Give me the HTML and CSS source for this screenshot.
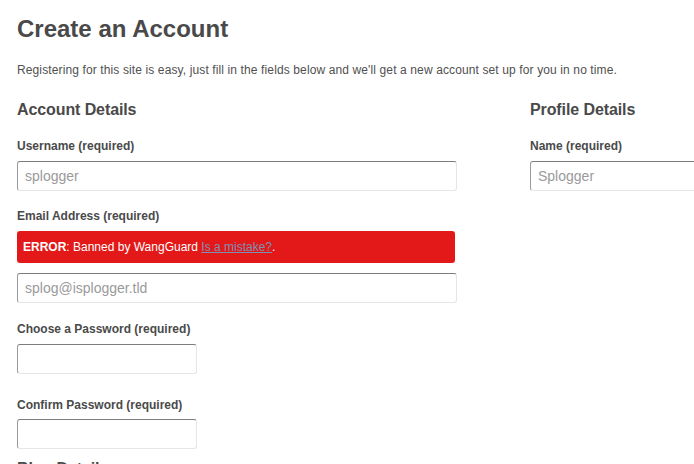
FILE: index.html
```html
<!DOCTYPE html>
<html lang="en">
<head>
<meta charset="utf-8">
<title>Create an Account</title>
<link rel="stylesheet" href="styles.css">
</head>
<body>
<div class="page">
  <h1 class="title">Create an Account</h1>
  <p class="intro">Registering for this site is easy, just fill in the fields below and we'll get a new account set up for you in no time.</p>
  <div class="columns">
    <section class="col">
      <h2 class="section-title">Account Details</h2>
      <div class="field">
        <label class="label">Username (required)</label>
        <input class="input wide" type="text" placeholder="splogger">
      </div>
      <div class="field email">
        <label class="label">Email Address (required)</label>
        <div class="error"><strong>ERROR</strong>: Banned by WangGuard <a href="#" class="error-link">Is a mistake?</a>.</div>
        <input class="input wide" type="text" placeholder="splog@isplogger.tld">
      </div>
      <div class="field pw">
        <label class="label">Choose a Password (required)</label>
        <input class="input short" type="password">
      </div>
      <div class="field last">
        <label class="label">Confirm Password (required)</label>
        <input class="input short" type="password">
      </div>
      <h2 class="section-title">Blog Details</h2>
    </section>
    <section class="col">
      <h2 class="section-title">Profile Details</h2>
      <div class="field">
        <label class="label">Name (required)</label>
        <input class="input wide" type="text" placeholder="Splogger">
      </div>
    </section>
  </div>
</div>
</body>
</html>
```
FILE: styles.css
```css
html, body {
  margin: 0;
  padding: 0;
  background: #ffffff;
  overflow: hidden;
}
body {
  font-family: "Liberation Sans", Arial, sans-serif;
  color: #4a4a4a;
}
.page {
  padding: 15px 0 0 17px;
  width: 1000px;
}
.title {
  margin: 0;
  font-size: 24px;
  line-height: 28px;
  font-weight: bold;
  color: #494949;
}
.intro {
  margin: 18px 0 0;
  font-size: 12px;
  line-height: 18px;
  letter-spacing: 0.12px;
  color: #505050;
}
.columns {
  display: grid;
  grid-template-columns: 440px 440px;
  column-gap: 73px;
  margin-top: 21px;
}
.section-title {
  margin: 0 0 17px;
  font-size: 16px;
  line-height: 20px;
  font-weight: bold;
  letter-spacing: -0.1px;
  color: #494949;
}
.field {
  margin-bottom: 16px;
}
.field.email {
  margin-bottom: 17px;
}
.field.pw {
  margin-bottom: 22px;
}
.field.last {
  margin-bottom: 10px;
}
.label {
  display: block;
  font-size: 12px;
  line-height: 18px;
  font-weight: bold;
  color: #4a4a4a;
  margin-bottom: 6px;
}
.field.last .label {
  margin-bottom: 5px;
}
.input {
  display: block;
  box-sizing: border-box;
  height: 30px;
  margin: 0;
  padding: 0 7px;
  font-family: "Liberation Sans", Arial, sans-serif;
  font-size: 14px;
  color: #555;
  background: #fff;
  border: 1px solid #e6e6e6;
  border-top-color: #7d7d7d;
  border-left-color: #9a9a9a;
  border-radius: 3px;
  outline: none;
}
.input::placeholder {
  color: #9a9a9a;
}
.input.wide {
  width: 440px;
}
.input.short {
  width: 180px;
}
.error {
  box-sizing: border-box;
  width: 438px;
  height: 32px;
  margin-bottom: 10px;
  padding: 7px 6px;
  font-size: 12px;
  line-height: 18px;
  color: #ffffff;
  background: #e31818;
  border-radius: 3px;
}
.error strong {
  font-weight: bold;
}
.error-link {
  color: #7d91b5;
  text-decoration: underline;
}
```
